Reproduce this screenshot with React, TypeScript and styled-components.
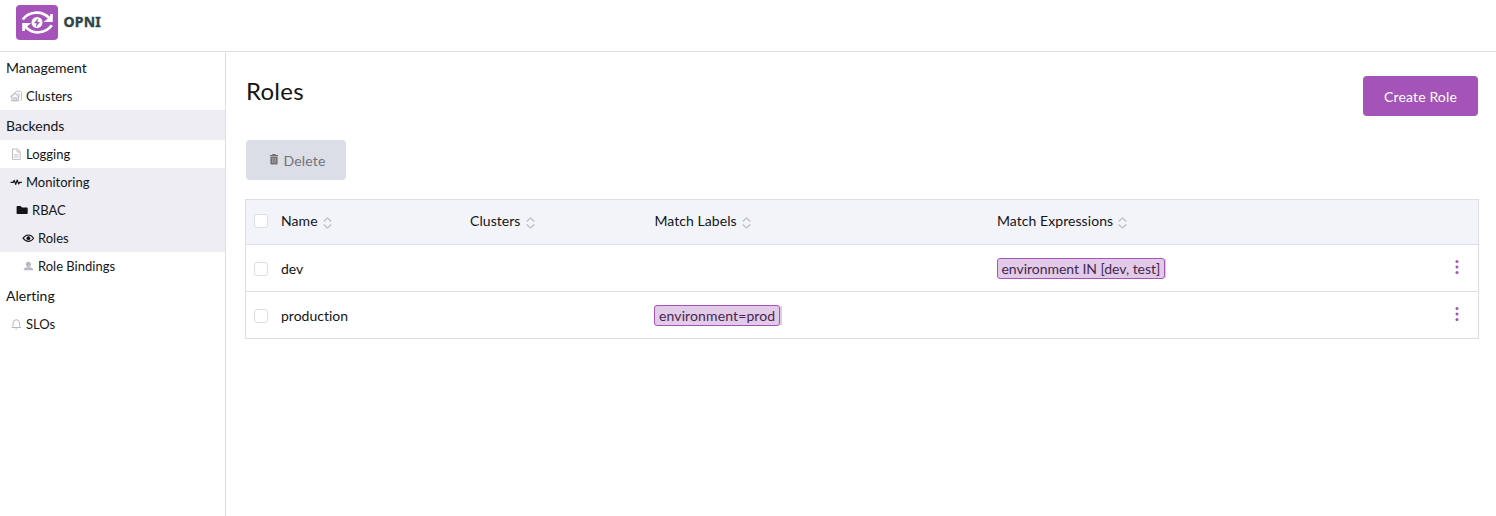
import React from 'react';
import styled, { createGlobalStyle, css } from 'styled-components';

const GlobalStyle = createGlobalStyle`
  * { box-sizing: border-box; }
  body {
    margin: 0;
    background: #fff;
    color: #141419;
    font-family: Lato, "Liberation Sans", sans-serif;
    font-size: 14px;
    font-variant-ligatures: none;
  }
`;

const Page = styled.div`
  display: flex;
  flex-direction: column;
  height: 100vh;
  overflow: hidden;
`;

const Header = styled.header`
  display: flex;
  align-items: flex-start;
  flex: 0 0 52px;
  padding: 5px 0 0 16px;
  border-bottom: 1px solid #dcdee7;
`;

const Brand = styled.span`
  margin: 7px 0 0 5.500px;
  font: 700 14px/20px "Noto Sans", "Open Sans", sans-serif;
  letter-spacing: .2px;
  -webkit-text-stroke: .4px #2f4545;
  color: #2f4545;
`;

const Body = styled.div`
  display: flex;
  flex: 1;
`;

const Sidebar = styled.nav`
  flex: 0 0 226px;
  border-right: 1px solid #dcdee7;
`;

const GroupTitle = styled.div<{ $active?: boolean }>`
  height: 30px;
  padding: 1px 0 0 6px;
  line-height: 30px;
  background: ${p => (p.$active ? '#ededf3' : 'transparent')};
`;

const NavItem = styled.a<{ $level: number; $active?: boolean }>`
  display: flex;
  align-items: center;
  gap: 3px;
  height: 28px;
  padding-left: ${p => 4 + p.$level * 6}px;
  font-size: 13px;
  line-height: 28px;
  color: #141419;
  background: ${p => (p.$active ? '#ededf3' : 'transparent')};
  svg {
    flex: none;
    color: ${p => (p.$active ? '#141419' : '#b9bac6')};
  }
`;

const Main = styled.main`
  flex: 1;
  padding: 24px 17px 0 19px;
`;

const TitleBar = styled.div`
  display: flex;
  justify-content: space-between;
  align-items: flex-start;
  height: 64px;
  padding: 0 1px;
`;

const Title = styled.h1`
  margin: 0;
  font-size: 24px;
  line-height: 30px;
  font-weight: 400;
  letter-spacing: .25px;
`;

const Button = styled.button<{ $disabled?: boolean }>`
  display: flex;
  align-items: center;
  justify-content: center;
  gap: 4px;
  width: 115px;
  height: 40px;
  padding: 2px 0 0;
  border: 0;
  border-radius: 4px;
  font: 400 14px/20px Lato, sans-serif;
  letter-spacing: .15px;
  color: #fff;
  background: #a453b9;
  ${p => p.$disabled && css`
    gap: 5px;
    width: 100px;
    margin-left: 1px;
    padding-left: 2px;
    color: #717179;
    background: #dcdee7;
  `}
`;

const Table = styled.div`
  margin-top: 19px;
  border: 1px solid #dcdee7;
`;

const Row = styled.div<{ $head?: boolean }>`
  display: grid;
  grid-template-columns: 35px 189px 184.5px 342.5px 1fr 42px;
  align-items: center;
  height: ${p => (p.$head ? 44 : 46)}px;
  padding-bottom: ${p => (p.$head ? 2 : 0)}px;
  background: ${p => (p.$head ? '#f3f4fa' : '#fff')};
  & + & { border-top: 1px solid #dcdee7; height: 47px; }
`;

const Cell = styled.div<{ $low?: boolean }>`
  display: flex;
  align-items: center;
  gap: 5px;
  padding-top: ${p => (p.$low ? 2 : 0)}px;
  line-height: 20px;
`;

const HeadCell = styled(Cell)`
  letter-spacing: .06px;
`;

const Checkbox = styled.span`
  width: 14px;
  height: 14px;
  margin-left: 8px;
  border: 1px solid #dcdee7;
  border-radius: 3px;
  background: #fff;
`;

const Badge = styled.span<{ $tail: number; $tracking: number }>`
  height: 21px;
  margin-left: -0.5px;
  padding: 0 4px;
  border: 1px solid #a453b9;
  border-radius: 3px;
  background: #e2cbe9;
  color: #44284d;
  line-height: 20px;
  letter-spacing: ${p => p.$tracking}px;
  position: relative;
  &::after {
    content: '';
    position: absolute;
    top: 0;
    bottom: 0;
    right: ${p => -1 - p.$tail}px;
    width: ${p => p.$tail}px;
    background: #e2cbe9;
  }
`;

const Logo = () => (
  <svg width="42" height="35" viewBox="0 0 42 35">
    <rect width="42" height="35" rx="4" fill="#a453b9" />
    <g fill="none" stroke="#fff" strokeWidth="2.700">
      <path d="M6.800 14.600C12 6.800 25 4.800 33 12.800" />
      <path d="M35.800 20.300C30 28.300 17 30.200 9.800 22.200" />
    </g>
    <path d="M36.800 9V17H27.600L31 14.300L34 11.500L34.300 9Z" fill="#fff" />
    <path d="M6.200 26V18H15.200L12 20.700L9.200 23.500L8.700 26Z" fill="#fff" />
    <circle cx="21" cy="17.500" r="5.500" fill="#fff" />
    <path d="M22.200 13l-4.200 5.300h2.600l-.9 4.200 4.200-5.600h-2.600z" fill="#a453b9" />
  </svg>
);

const icons = {
  cluster: (
    <g fill="none" stroke="currentColor">
      <path d="M.6 6.800L5 3.200l4.300 3.600M1.900 6v4.600h6.400V6M3.900 10.500V7.900h2.400v2.600" strokeWidth="1.100" />
      <path d="M4.500 2.600L6.800 1.200h3.300q1.500 0 1.500 1.600v6.400q0 1.100-1.300 1.100M7.400 3.200q2.300.3 2.500 2.400" strokeWidth=".9" />
    </g>
  ),
  file: (
    <g fill="none" stroke="currentColor">
      <path d="M2.500 1h5l2.700 2.700v7.600H2.500zM7.200 1v3h3" />
      <path d="M4 6.800h4.600M4 8.800h4.600" strokeWidth=".9" />
    </g>
  ),
  pulse: (
    <path d="M.6 6.400h2.600l1.100-2 1.400 4L7.200 4l1.500 4 1-1.600h2.200" fill="none" stroke="currentColor" strokeWidth="1.200" strokeLinejoin="round" />
  ),
  folder: <path d="M.6 2.800q0-.8.8-.8h3.200l1.400 1.400h4.900q.8 0 .8.800v5q0 .8-.8.800H1.400q-.8 0-.8-.8z" fill="currentColor" />,
  eye: (
    <g>
      <path d="M1 6.200Q3.400 3 6.400 3t5.200 3.200Q9.400 9.400 6.400 9.400T1 6.200z" fill="none" stroke="currentColor" strokeWidth="1.100" />
      <circle cx="6.400" cy="6.200" r="1.900" fill="currentColor" />
    </g>
  ),
  user: (
    <g fill="currentColor">
      <circle cx="6.400" cy="4.300" r="2.600" />
      <path d="M1.800 10.200V9.200q0-1.700 2.600-2h4q2.600.3 2.600 2v1z" />
    </g>
  ),
  bell: (
    <path d="M1.700 9.500q1.400-.8 1.400-2.300V5q0-3.200 3.200-3.200T9.500 5v2.200q0 1.500 1.400 2.300zM5.400 11h1.900M6.300 1v.8" fill="none" stroke="currentColor" />
  ),
};

const NavIcon = ({ name }: { name: keyof typeof icons }) => (
  <svg width="13" height="12" viewBox="0 0 13 12">{icons[name]}</svg>
);

const TrashIcon = styled.svg`
  margin-top: -3px;
`;

const Trash = () => (
  <TrashIcon width="10" height="11" viewBox="0 0 10 11">
    <path d="M.8 1.500h8.400M3.500 1V.5h3V1" fill="none" stroke="#75706f" />
    <path d="M1.400 2.500h7.200v7.200q0 .8-.8.800H2.200q-.8 0-.8-.8z" fill="#75706f" />
    <path d="M3.500 3.800v5.200M5 3.800v5.200M6.500 3.800v5.200" stroke="#c3c1c6" strokeWidth=".5" />
  </TrashIcon>
);

const SortIcon = styled.svg`
  margin-top: 3px;
`;

const Sort = () => (
  <SortIcon width="9" height="12" viewBox="0 0 9 12" fill="none" stroke="#b7b8c0" strokeWidth="1.100">
    <path d="M.7 4.500L4.500.9l3.800 3.600M.7 7.500l3.800 3.600 3.800-3.600" />
  </SortIcon>
);

const Dots = () => (
  <svg width="4" height="14" viewBox="0 0 4 14" fill="#a453b9">
    <circle cx="2" cy="1.500" r="1.500" />
    <circle cx="2" cy="7" r="1.500" />
    <circle cx="2" cy="12.500" r="1.500" />
  </svg>
);

const ActionCell = styled(Cell)`
  padding: 0 0 3px 19px;
`;

const columns = ['Name', 'Clusters', 'Match Labels', 'Match Expressions'];
const roles = [
  { name: 'dev', labels: '', expressions: 'environment IN [dev, test]' },
  { name: 'production', labels: 'environment=prod', expressions: '' },
];

export default function App() {
  return (
    <Page>
      <GlobalStyle />
      <Header>
        <Logo />
        <Brand>OPNI</Brand>
      </Header>
      <Body>
        <Sidebar>
          <GroupTitle>Management</GroupTitle>
          <NavItem $level={1}><NavIcon name="cluster" />Clusters</NavItem>
          <GroupTitle $active>Backends</GroupTitle>
          <NavItem $level={1}><NavIcon name="file" />Logging</NavItem>
          <NavItem $level={1} $active><NavIcon name="pulse" />Monitoring</NavItem>
          <NavItem $level={2} $active><NavIcon name="folder" />RBAC</NavItem>
          <NavItem $level={3} $active><NavIcon name="eye" />Roles</NavItem>
          <NavItem $level={3}><NavIcon name="user" />Role Bindings</NavItem>
          <GroupTitle>Alerting</GroupTitle>
          <NavItem $level={1}><NavIcon name="bell" />SLOs</NavItem>
        </Sidebar>
        <Main>
          <TitleBar>
            <Title>Roles</Title>
            <Button>Create Role</Button>
          </TitleBar>
          <Button $disabled><Trash />Delete</Button>
          <Table>
            <Row $head>
              <Cell><Checkbox /></Cell>
              {columns.map(c => <HeadCell key={c}>{c}<Sort /></HeadCell>)}
            </Row>
            {roles.map(r => (
              <Row key={r.name}>
                <Cell $low><Checkbox /></Cell>
                <Cell $low>{r.name}</Cell>
                <Cell />
                <Cell>{r.labels && <Badge $tail={2} $tracking={0.12}>{r.labels}</Badge>}</Cell>
                <Cell>{r.expressions && <Badge $tail={1} $tracking={-0.04}>{r.expressions}</Badge>}</Cell>
                <ActionCell><Dots /></ActionCell>
              </Row>
            ))}
          </Table>
        </Main>
      </Body>
    </Page>
  );
}
